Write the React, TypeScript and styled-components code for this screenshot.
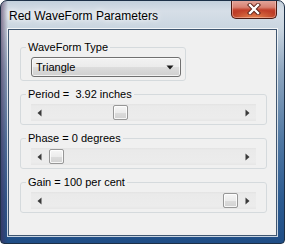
import React from 'react';
import styled, { createGlobalStyle } from 'styled-components';

const GlobalStyle = createGlobalStyle`
  html, body {
    margin: 0;
    padding: 0;
    background: #ffffff;
  }
  body {
    font-family: "Liberation Sans", Arial, sans-serif;
  }
`;

const Window = styled.div`
  width: 285px;
  height: 244px;
  box-sizing: border-box;
  border: 1px solid #1d3047;
  border-radius: 7px 7px 4px 4px;
  padding: 0 7px 7px 7px;
  display: flex;
  flex-direction: column;
  overflow: hidden;
  background:
    linear-gradient(90deg, rgba(70, 40, 80, 0.55) 0px, rgba(70, 40, 80, 0) 7px),
    linear-gradient(
      180deg,
      #c3d0dc 0px,
      #d6dee7 10px,
      #c9d5e0 28px,
      #8ea6bf 70px,
      #4f77a2 140px,
      #2b5a90 200px,
      #1f4d85 244px
    );
`;

const TitleBar = styled.div`
  height: 28px;
  display: flex;
  align-items: flex-start;
  justify-content: space-between;
`;

const Title = styled.div`
  margin-top: 8px;
  margin-left: 1px;
  font-size: 12px;
  line-height: 14px;
  color: #000;
  text-shadow: 0 0 5px #fff, 0 0 8px rgba(255, 255, 255, 0.9);
  white-space: nowrap;
`;

const CloseButton = styled.div`
  margin-top: -1px;
  width: 46px;
  height: 19px;
  box-sizing: border-box;
  border: 1px solid #4a1a12;
  border-top: none;
  border-radius: 0 0 5px 5px;
  display: flex;
  align-items: center;
  justify-content: center;
  background:
    radial-gradient(ellipse 60% 45% at 50% 100%, rgba(240, 150, 90, 0.85), rgba(240, 150, 90, 0)),
    linear-gradient(180deg, #e3a99f 0%, #d88272 40%, #c2412b 55%, #b3301c 100%);
  box-shadow: inset 0 0 0 1px rgba(255, 220, 210, 0.45);
`;

const Client = styled.div`
  flex: 1;
  box-sizing: border-box;
  border: 1px solid #3f5670;
  box-shadow: 0 0 0 1px rgba(255, 255, 255, 0.75);
  background: #f0f0f0;
  padding: 11px 0 0 11px;
  display: flex;
  flex-direction: column;
  align-items: flex-start;
  gap: 7px;
`;

const GroupBox = styled.fieldset<{ $width: number }>`
  margin: 0;
  padding: 0;
  width: ${p => p.$width}px;
  box-sizing: border-box;
  border: 1px solid #d5dadd;
  border-radius: 3px;
  min-inline-size: 0;
`;

const GroupLabel = styled.legend`
  margin-left: 5px;
  padding: 0 2px;
  font-size: 11px;
  line-height: 13px;
  color: #000;
  white-space: pre;
`;

const GroupBody = styled.div<{ $right: number }>`
  padding: 3px ${p => p.$right}px 3px 10px;
`;

const Combo = styled.div`
  height: 20px;
  box-sizing: border-box;
  border: 1px solid #707070;
  border-radius: 3px;
  display: flex;
  align-items: center;
  justify-content: space-between;
  padding: 0 6px 0 4px;
  font-size: 11px;
  color: #000;
  background: linear-gradient(180deg, #f2f2f2 0%, #ebebeb 50%, #dddddd 50%, #cfcfcf 100%);
  box-shadow: inset 0 0 0 1px rgba(255, 255, 255, 0.7);
`;

const Scrollbar = styled.div`
  width: 225px;
  height: 17px;
  display: flex;
  align-items: center;
  background: linear-gradient(180deg, #e3e3e3 0px, #eaeaea 2px, #ececec 14px, #e6e6e6 17px);
`;

const ArrowButton = styled.div`
  width: 17px;
  height: 17px;
  flex: none;
  display: flex;
  align-items: center;
  justify-content: center;
`;

const Track = styled.div`
  flex: 1;
  height: 17px;
  display: flex;
  align-items: center;
  padding-left: 1px;
`;

const Thumb = styled.div`
  width: 15px;
  height: 15px;
  box-sizing: border-box;
  border: 1px solid #979797;
  border-radius: 2px;
  background: linear-gradient(180deg, #f6f6f6 0%, #ececec 50%, #dcdcdc 51%, #d2d2d2 100%);
  box-shadow: inset 0 0 0 1px rgba(255, 255, 255, 0.8);
`;

const Arrow = ({ dir }: { dir: 'left' | 'right' | 'down' }) => {
  if (dir === 'down') {
    return (
      <svg width="8" height="5" viewBox="0 0 8 5">
        <path d="M0.5 0.5 H7.5 L4 4.5 Z" fill="#1a1a1a" />
      </svg>
    );
  }
  return (
    <svg width="5" height="8" viewBox="0 0 5 8">
      {dir === 'left' ? (
        <path d="M4.5 0.5 V7.5 L0.5 4 Z" fill="#3a3a3a" />
      ) : (
        <path d="M0.5 0.5 V7.5 L4.5 4 Z" fill="#3a3a3a" />
      )}
    </svg>
  );
};

const CloseGlyph = () => (
  <svg width="14" height="12" viewBox="0 0 14 12">
    <path d="M3 2 L11 10 M11 2 L3 10" stroke="#5a2016" strokeWidth="4.2" strokeLinecap="square" />
    <path d="M3 2 L11 10 M11 2 L3 10" stroke="#ffffff" strokeWidth="2.4" strokeLinecap="square" />
  </svg>
);

type SliderProps = {
  label: string;
  value: number;
};

const TRAVEL = 174;

const SliderGroup = ({ label, value }: SliderProps) => (
  <GroupBox $width={247}>
    <GroupLabel>{label}</GroupLabel>
    <GroupBody $right={10}>
      <Scrollbar>
        <ArrowButton>
          <Arrow dir="left" />
        </ArrowButton>
        <Track>
          <Thumb style={{ marginLeft: Math.round(value * TRAVEL) }} />
        </Track>
        <ArrowButton>
          <Arrow dir="right" />
        </ArrowButton>
      </Scrollbar>
    </GroupBody>
  </GroupBox>
);

const sliders: SliderProps[] = [
  { label: 'Period =  3.92 inches', value: 0.368 },
  { label: 'Phase = 0 degrees', value: 0 },
  { label: 'Gain = 100 per cent', value: 1 },
];

export default function App() {
  return (
    <>
      <GlobalStyle />
      <Window>
        <TitleBar>
          <Title>Red WaveForm Parameters</Title>
          <CloseButton>
            <CloseGlyph />
          </CloseButton>
        </TitleBar>
        <Client>
          <GroupBox $width={166}>
            <GroupLabel>WaveForm Type</GroupLabel>
            <GroupBody $right={4}>
              <Combo>
                <span>Triangle</span>
                <Arrow dir="down" />
              </Combo>
            </GroupBody>
          </GroupBox>
          {sliders.map(s => (
            <SliderGroup key={s.label} label={s.label} value={s.value} />
          ))}
        </Client>
      </Window>
    </>
  );
}
